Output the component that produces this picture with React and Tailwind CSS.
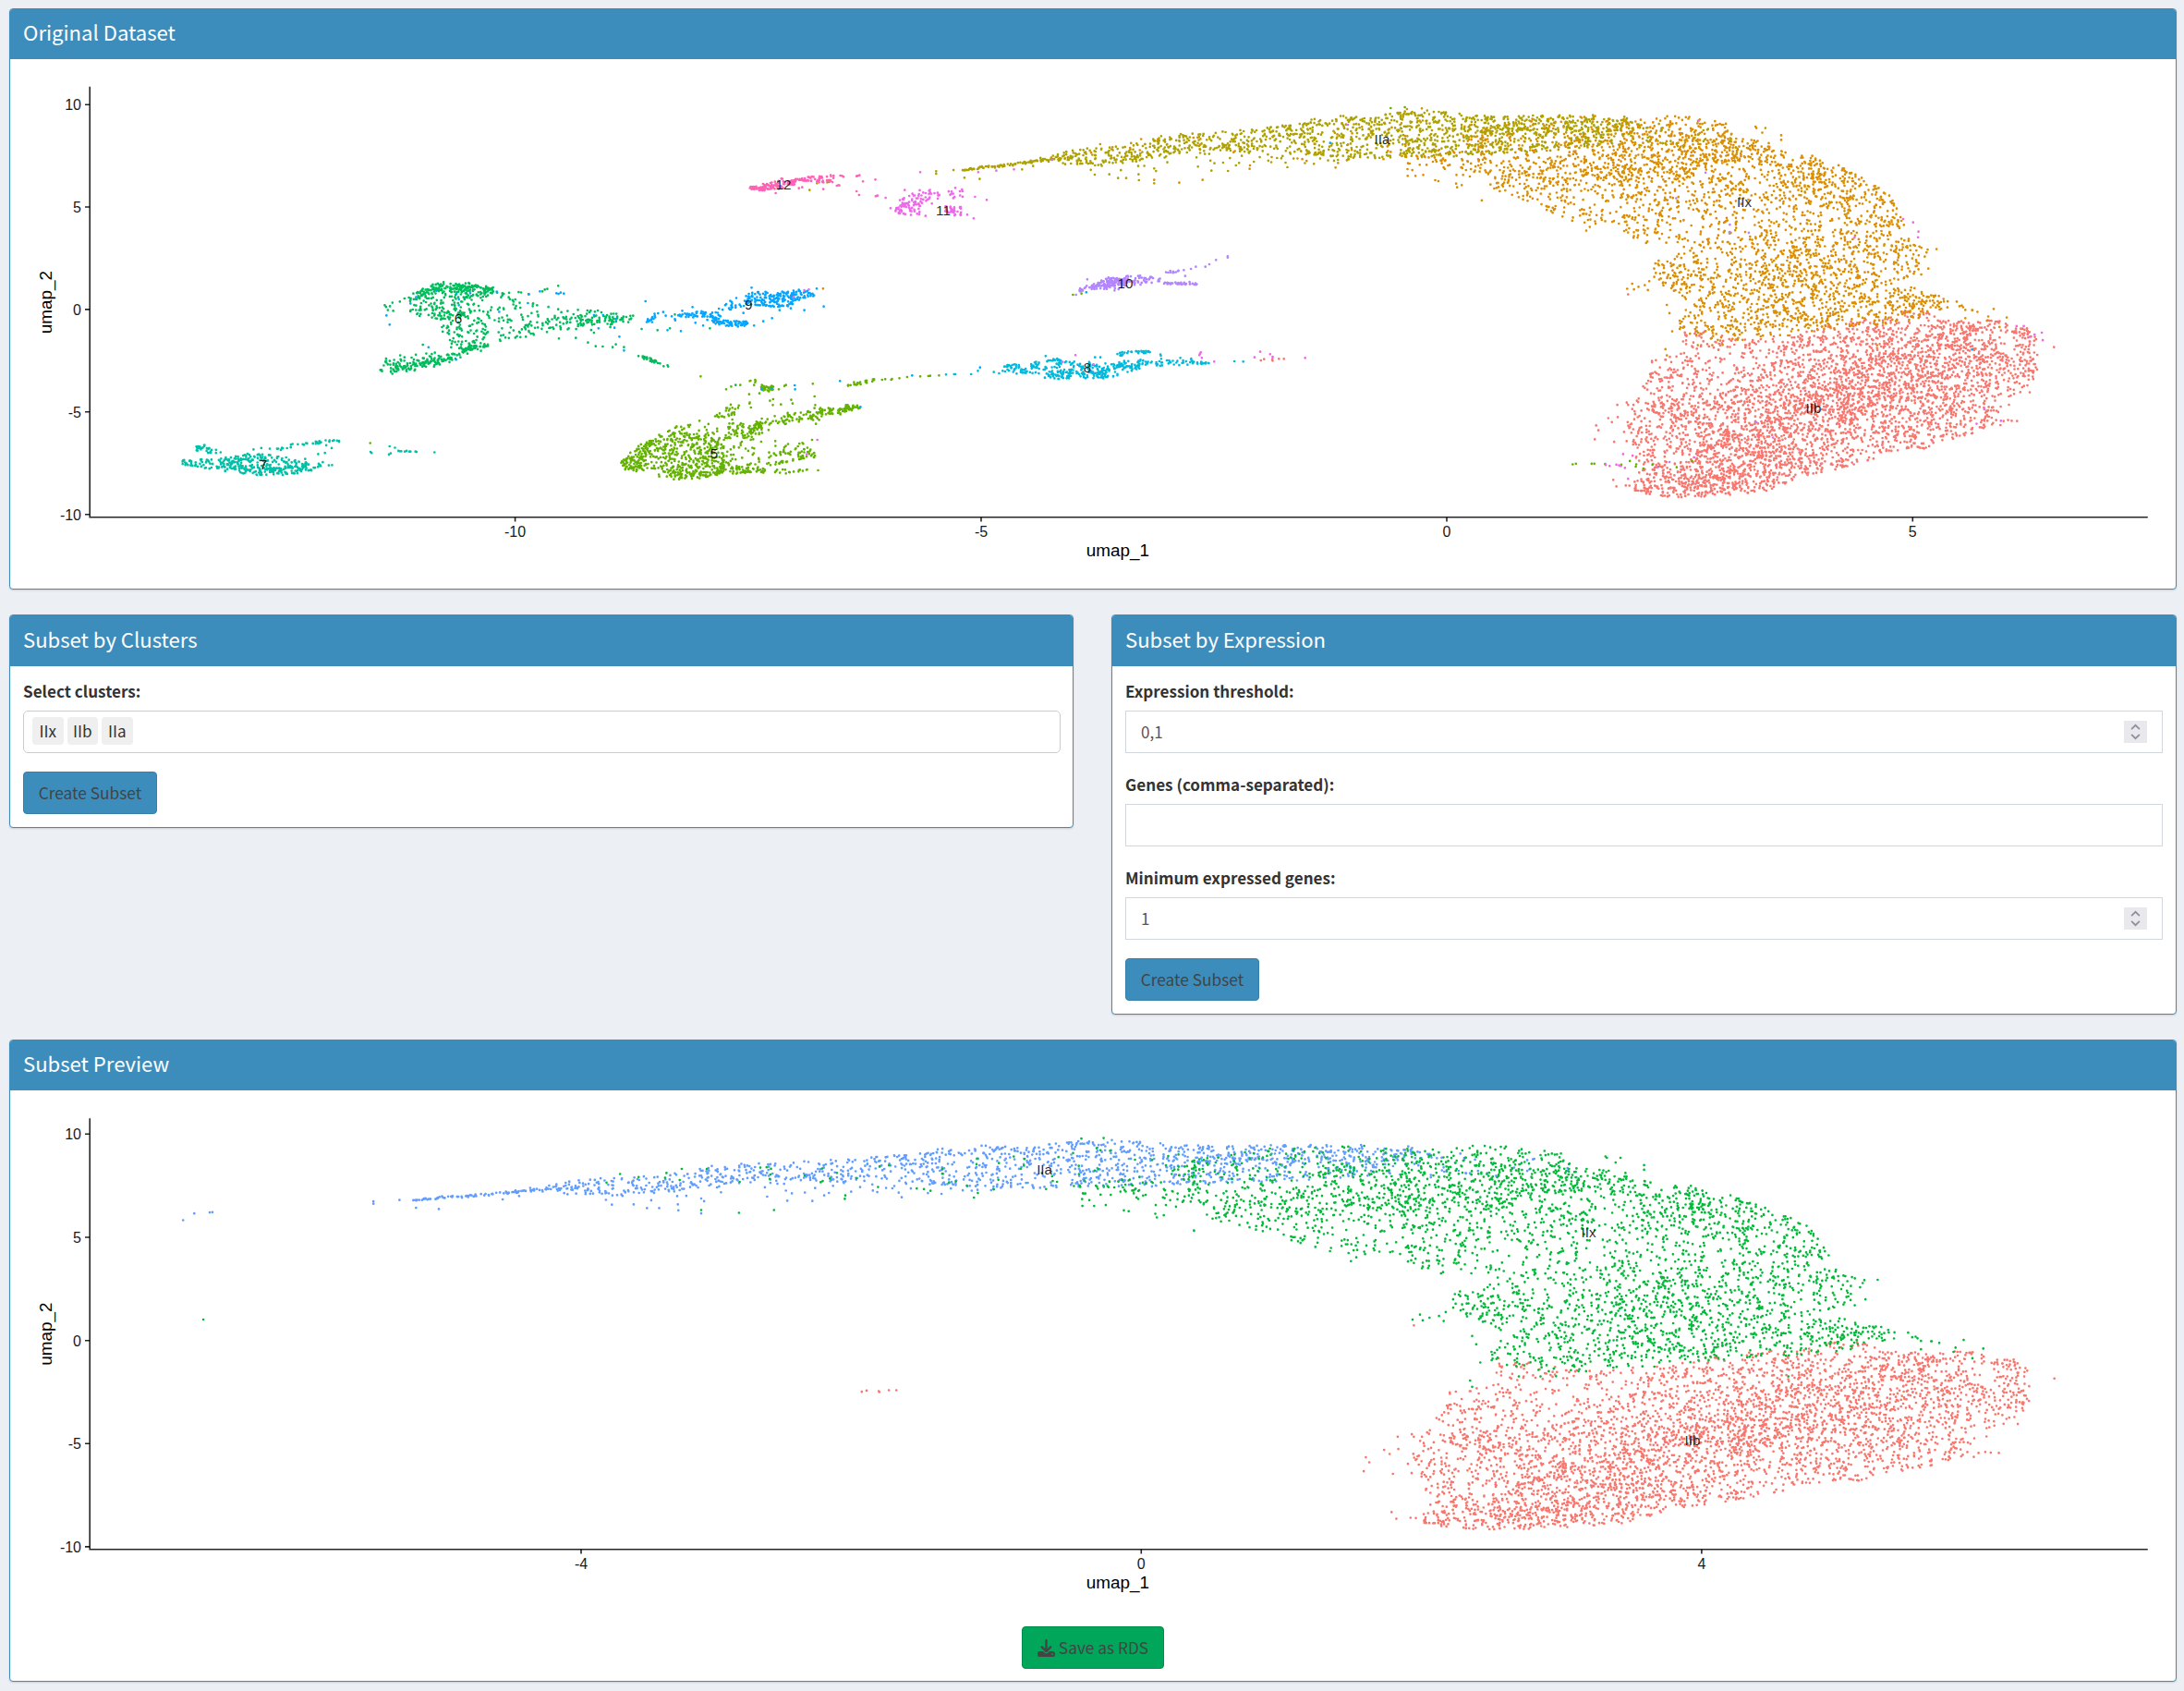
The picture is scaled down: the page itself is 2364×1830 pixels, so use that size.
import React from "react";
import { FaDownload } from "react-icons/fa6";

/* ---------- point cloud ---------- */

function makeRng(seed) {
  let s = seed;
  return () => {
    s = (s + 0x6d2b79f5) | 0;
    let t = Math.imul(s ^ (s >>> 15), 1 | s);
    t = (t + Math.imul(t ^ (t >>> 7), 61 | t)) ^ t;
    return ((t ^ (t >>> 14)) >>> 0) / 4294967296;
  };
}

const rnd = makeRng(7);

// Tiles of the embedding: origin and units per pixel on each axis.
const A = [0, 0, 2.613, 2.613];
const B = [600, 80, 2.613, 3];
const C = [1100, 80, 2.613, 3];
const D = [1600, 80, 2.052, 2.8];

const clusters = { IIb: [], IIx: [], IIa: [], c5: [], c6: [], c7: [], c8: [], c9: [], c10: [], c11: [], c12: [] };

const put = (id, t, x, y) => clusters[id].push([t[0] + x / t[2], t[1] + y / t[3]]);

// Explicit points.
const dots = (id, t, list) => list.forEach(([x, y]) => put(id, t, x, y));

// n points along a band; stations are [x, centre y, half height, weight].
function band(id, t, n, st, soft) {
  const cum = [0];
  for (let i = 1; i < st.length; i++) {
    cum.push(cum[i - 1] + (st[i][0] - st[i - 1][0]) * ((st[i][3] ?? 1) + (st[i - 1][3] ?? 1)));
  }
  const total = cum[cum.length - 1];
  for (let k = 0; k < n; k++) {
    const r = rnd() * total;
    let i = 1;
    while (cum[i] < r) i++;
    const a = st[i - 1];
    const b = st[i];
    const f = (r - cum[i - 1]) / (cum[i] - cum[i - 1]);
    const u = soft ? (rnd() + rnd() + rnd() - 1.5) / 1.2 : rnd() * 2 - 1;
    put(id, t, a[0] + (b[0] - a[0]) * f, a[1] + (b[1] - a[1]) * f + u * (a[2] + (b[2] - a[2]) * f));
  }
}

function inside(p, x, y) {
  let c = false;
  for (let i = 0, j = p.length - 1; i < p.length; j = i++) {
    if (p[i][1] > y !== p[j][1] > y && x < ((p[j][0] - p[i][0]) * (y - p[i][1])) / (p[j][1] - p[i][1]) + p[i][0]) c = !c;
  }
  return c;
}

// n points inside a polygon; weight(x, y) in 0..1 thins the cloud.
function area(id, t, n, p, weight) {
  const xs = p.map((q) => q[0]);
  const ys = p.map((q) => q[1]);
  const x0 = Math.min(...xs);
  const y0 = Math.min(...ys);
  const w = Math.max(...xs) - x0;
  const h = Math.max(...ys) - y0;
  let k = 0;
  while (k < n) {
    const x = x0 + rnd() * w;
    const y = y0 + rnd() * h;
    if (inside(p, x, y) && (!weight || rnd() < weight(x, y))) {
      put(id, t, x, y);
      k++;
    }
  }
}

const bump = (x, y, cx, cy, sx, sy) => Math.exp(-(((x - cx) / sx) ** 2) - ((y - cy) / sy) ** 2);

/* IIb */
area("IIb", D, 4250, [
  [455, 765], [500, 775], [560, 800], [620, 798], [700, 790], [760, 762], [820, 745], [900, 745], [940, 722], [985, 708], [1030, 738],
  [1100, 755], [1140, 742], [1190, 760], [1215, 765], [1240, 800], [1247, 870], [1243, 910], [1225, 970], [1195, 988], [1165, 1020],
  [1150, 1055], [1125, 1078], [1040, 1112], [990, 1142], [900, 1158], [820, 1190], [700, 1232], [640, 1265], [540, 1278], [450, 1285],
  [380, 1275], [330, 1255], [350, 1225], [365, 1190], [335, 1140], [315, 1110], [330, 1050], [350, 990], [370, 930], [387, 870], [430, 855], [455, 800],
], (x, y) => Math.min(1, 0.38
  + 0.55 * bump(x, y, 480, 1245, 170, 50)
  + 0.42 * bump(x, y, 620, 1140, 160, 100)
  + 0.4 * bump(x, y, 760, 980, 150, 100)
  + 0.42 * bump(x, y, 980, 900, 150, 110)
  + 0.35 * bump(x, y, 1200, 880, 60, 40)
  - 0.2 * bump(x, y, 540, 850, 130, 80)
  - 0.12 * bump(x, y, 340, 1120, 40, 150)
  - 0.12 * bump(x, y, 1190, 980, 70, 60)));
dots("IIb", D, [
  [262, 1065], [267, 1080], [259, 1107], [289, 1043], [297, 1055], [309, 1003], [310, 1040], [330, 996], [333, 1003], [302, 1115], [300, 1230],
  [307, 1250], [328, 1247], [1279, 828], [1197, 1052], [1185, 1051], [1177, 1049], [1167, 1052], [1160, 1064], [333, 668], [345, 1003], [386, 870],
]);
dots("IIb", C, [[692, 930], [701, 926], [724, 928], [725, 931], [743, 925], [757, 925]]);

/* IIx */
area("IIx", D, 3200, [
  [0, 262], [0, 300], [40, 355], [100, 378], [160, 420], [240, 465], [290, 458], [350, 500], [415, 510], [450, 535], [415, 570], [400, 600],
  [400, 640], [470, 690], [450, 735], [440, 780], [500, 800], [560, 812], [630, 800], [700, 792], [760, 780], [850, 762], [950, 758],
  [1000, 728], [1050, 712], [1040, 680], [1000, 660], [930, 625], [985, 610], [990, 560], [1000, 530], [965, 510], [945, 480], [950, 430],
  [930, 385], [880, 335], [830, 298], [790, 268], [745, 248], [690, 243], [640, 205], [570, 192], [550, 150], [490, 130], [430, 125],
  [350, 140], [290, 160], [200, 200], [100, 240],
], (x, y) => Math.min(1, 0.38
  + 0.5 * bump(x, y, 540, 210, 110, 45)
  + 0.4 * bump(x, y, 370, 270, 130, 60)
  + 0.35 * bump(x, y, 750, 300, 80, 50)
  + 0.3 * bump(x, y, 890, 380, 60, 60)
  + 0.5 * bump(x, y, 960, 690, 60, 35)
  + 0.2 * bump(x, y, 720, 610, 180, 80)
  + 0.15 * bump(x, y, 660, 740, 150, 50)
  - 0.18 * bump(x, y, 180, 400, 180, 70)
  - 0.2 * bump(x, y, 450, 480, 90, 60)
  - 0.08 * bump(x, y, 620, 450, 120, 60)));
area("IIx", D, 130, [[0, 170], [120, 135], [300, 125], [350, 140], [290, 190], [150, 230], [0, 262]]);
area("IIx", C, 75, [[1100, 270], [1300, 200], [1330, 200], [1330, 330], [1250, 310], [1100, 290]]);
area("IIx", C, 45, [[1306, 300], [1568, 320], [1568, 465], [1500, 435], [1400, 402], [1340, 370]]);
band("IIx", C, 50, [[860, 240, 70], [1000, 230, 75], [1150, 230, 90], [1320, 240, 80]]);
band("IIx", C, 30, [[200, 240, 22, 0.3], [500, 230, 30, 0.4], [700, 230, 50, 1], [860, 220, 70, 1]]);
dots("IIx", C, [
  [390, 344], [461, 353], [527, 344], [903, 304], [1107, 331], [1129, 331], [1151, 328], [1185, 345], [1194, 348], [1245, 328], [1244, 356],
  [1247, 368], [1260, 361], [1317, 411], [1264, 328], [1283, 333], [1147, 112], [1105, 114], [661, 297], [660, 308],
]);
dots("IIx", D, [
  [616, 160], [618, 164], [638, 164], [631, 178], [673, 186], [673, 200], [1018, 531], [331, 651], [342, 636], [346, 653], [356, 645], [370, 640],
  [377, 655], [380, 628], [391, 590], [401, 566], [419, 853], [416, 834], [419, 700], [425, 725], [431, 780], [1145, 712], [1174, 738], [1158, 767],
  [1133, 735], [1130, 748], [1097, 716], [1098, 716], [1109, 721], [1082, 740], [1082, 715], [1077, 707], [1074, 702], [1063, 690], [1069, 704],
  [886, 822], [517, 802], [520, 822], [543, 821], [488, 822], [240, 475], [1000, 590], [8, 383], [376, 508], [373, 512],
]);
band("IIx", D, 25, [[390, 600, 30], [460, 620, 50]]);
dots("IIx", B, [[760, 697]]);

/* IIa */
band("IIa", B, 105, [[1155, 312, 3, 1], [1230, 302, 6, 0.9], [1290, 294, 8, 1.8], [1350, 288, 9, 0.6], [1400, 275, 12, 0.8], [1450, 268, 20, 1.3]], true);
dots("IIa", B, [
  [1080, 316], [1080, 324], [1129, 312], [1160, 337], [1203, 341], [722, 377], [743, 355], [772, 352], [777, 351], [1323, 310], [1354, 299],
]);
band("IIa", C, 880, [
  [130, 272, 22, 1.1], [200, 268, 26, 1.2], [300, 262, 28, 0.7], [400, 240, 32, 0.9], [480, 218, 26, 1.1], [600, 218, 32, 0.9], [700, 218, 44, 1.1],
  [800, 212, 50, 1.1], [870, 207, 60, 1.3], [1000, 205, 70, 1.4], [1080, 200, 74, 1.8], [1170, 195, 74, 2], [1306, 202, 68, 1.8],
]);
band("IIa", C, 80, [[180, 300, 20], [340, 290, 40], [500, 260, 44], [600, 275, 34], [850, 265, 30], [1000, 265, 30]]);
band("IIa", C, 70, [[830, 165, 18], [930, 148, 14], [1000, 150, 20], [1080, 155, 35], [1170, 145, 28], [1250, 165, 35]]);
dots("IIa", C, [[288, 338], [311, 338], [347, 345], [390, 355], [767, 303], [842, 292], [599, 315], [552, 314], [222, 327], [263, 326], [410, 202], [346, 326]]);
band("IIa", D, 300, [[0, 185, 60, 2], [60, 182, 56, 1.9], [150, 180, 55, 1.7], [250, 175, 50, 1.2], [345, 170, 40, 0.6]]);
band("IIa", D, 130, [[0, 160, 30, 1.4], [100, 155, 28, 1.6], [230, 158, 28, 1.8], [345, 155, 24, 1.1]]);
band("IIa", D, 34, [[345, 190, 45, 1.5], [490, 190, 30, 0.8], [580, 210, 25, 0.3]]);

/* 5 */
area("c5", B, 400, [[185, 1265], [200, 1240], [235, 1205], [300, 1175], [345, 1160], [435, 1170], [480, 1210], [490, 1250], [480, 1298], [430, 1312], [340, 1318], [300, 1310], [250, 1295], [215, 1290]]);
area("c5", B, 70, [[185, 1265], [235, 1205], [310, 1180], [260, 1240], [240, 1290], [200, 1285]]);
area("c5", B, 50, [[300, 1270], [450, 1262], [470, 1300], [340, 1318], [300, 1305]]);
area("c5", B, 80, [[440, 1180], [600, 1205], [740, 1195], [740, 1240], [600, 1275], [560, 1290], [450, 1290]]);
band("c5", B, 80, [[450, 1290, 14, 2], [540, 1286, 10, 1.4], [600, 1288, 7, 0.7], [660, 1292, 8, 0.8], [715, 1287, 3, 0.5]]);
band("c5", B, 45, [[600, 1252, 20], [680, 1240, 18], [738, 1230, 16]]);
band("c5", B, 75, [[480, 1168, 24, 1], [540, 1162, 32, 1.4], [590, 1145, 36, 1]], true);
band("c5", B, 140, [[560, 1145, 18, 0.5], [640, 1122, 20, 0.7], [730, 1108, 22, 1.3], [800, 1092, 18, 1.5], [850, 1083, 12, 1.8], [865, 1081, 4, 1]], true);
band("c5", B, 40, [[585, 1020, 14], [620, 1020, 10]], true);
band("c5", B, 24, [[270, 1190, 20], [400, 1160, 32], [470, 1135, 36]]);
band("c5", B, 35, [[320, 1170, 20], [440, 1150, 40], [520, 1140, 40]]);
band("c5", B, 20, [[465, 1100, 16], [525, 1085, 20]]);
band("c5", B, 25, [[830, 1010, 4], [865, 1002, 6], [905, 995, 7]]);
dots("c5", B, [
  [414, 982], [486, 1024], [500, 1015], [526, 1010], [553, 997], [555, 996], [568, 993], [569, 997], [568, 1001], [565, 1010], [551, 1040],
  [553, 1067], [552, 1070], [556, 1083], [610, 1061], [619, 1056], [618, 1075], [641, 1073], [670, 1058], [674, 1070], [736, 1047], [738, 1075],
  [731, 1006], [655, 1010], [651, 1013], [635, 1024], [580, 1037], [927, 993], [936, 991], [953, 993], [955, 990], [976, 988], [998, 984],
  [1035, 982], [1058, 981], [1063, 980], [1088, 979], [746, 1287], [729, 1188], [704, 1201], [625, 1192], [585, 1194], [740, 1136], [367, 1151],
  [346, 1145], [1467, 717], [1491, 713], [606, 1156],
]);
dots("c5", D, [[210, 1183], [217, 1181], [252, 1181], [258, 1181], [282, 1182], [318, 1184], [337, 1173], [351, 1183], [350, 1190], [387, 1184], [441, 1192], [400, 1190], [475, 1173], [367, 1196]]);
dots("c5", C, [[1059, 111], [1099, 108]]);
dots("c5", A, [[1047, 1253]]);

/* 6 */
area("c6", A, 215, [[1155, 840], [1200, 808], [1255, 798], [1330, 802], [1395, 812], [1395, 835], [1330, 850], [1310, 900], [1240, 905], [1185, 895], [1155, 885]]);
band("c6", A, 90, [[1180, 835, 16], [1255, 812, 14], [1330, 812, 13], [1395, 820, 13]], true);
area("c6", A, 110, [[1240, 890], [1340, 870], [1380, 930], [1380, 965], [1330, 985], [1275, 985], [1250, 945]]);
area("c6", A, 85, [[1300, 830], [1400, 820], [1480, 850], [1568, 870], [1568, 935], [1500, 950], [1400, 970], [1360, 930]]);
band("c6", A, 180, [[1075, 1050, 10, 0.8], [1105, 1045, 18, 2], [1160, 1035, 19, 1.4], [1220, 1022, 17, 1.3], [1270, 1012, 17, 1.4], [1310, 992, 19, 2], [1350, 982, 15, 1.8], [1385, 978, 8, 0.3]], true);
band("c6", A, 28, [[1085, 1025, 10], [1240, 1010, 18]]);
band("c6", A, 25, [[1460, 940, 15], [1510, 930, 20], [1568, 912, 22]]);
dots("c6", A, [
  [1088, 863], [1092, 868], [1097, 877], [1103, 866], [1110, 856], [1112, 879], [1131, 853], [1144, 844], [1196, 975], [1132, 1005], [1176, 1003],
  [1440, 828], [1474, 827], [1495, 832], [1534, 824], [1541, 819], [1548, 817], [1442, 846], [1508, 858], [1551, 868], [1467, 826], [1421, 829],
]);
band("c6", B, 120, [[0, 795, 36, 1], [60, 798, 36, 1.3], [110, 795, 38, 1.8], [170, 797, 26, 1.6], [230, 790, 14, 0.6]], true);
dots("c6", B, [
  [11, 688], [11, 764], [18, 829], [13, 859], [61, 857], [95, 872], [117, 884], [137, 885], [165, 887], [174, 878], [197, 887], [238, 916], [247, 828],
  [292, 832], [327, 826], [440, 826], [341, 781], [293, 939], [299, 940], [309, 949], [320, 946], [322, 950], [513, 1010], [38, 829], [112, 840],
]);
band("c6", B, 26, [[250, 920, 4], [270, 927, 6], [288, 935, 4]]);

/* 7 */
band("c7", A, 290, [[515, 1307, 6, 1], [560, 1310, 12, 1.1], [620, 1312, 18, 1.3], [680, 1313, 26, 1.7], [740, 1314, 30, 2.4], [800, 1317, 26, 2.2], [845, 1320, 18, 1.8], [880, 1321, 10, 0.9], [912, 1320, 9, 0.8]]);
band("c7", A, 60, [[640, 1320, 14], [760, 1328, 12], [850, 1322, 12]], true);
band("c7", A, 26, [[555, 1268, 6], [580, 1268, 10], [600, 1278, 8]]);
band("c7", A, 38, [[780, 1273, 3], [820, 1262, 6], [870, 1256, 4], [910, 1248, 4], [970, 1248, 2]]);
dots("c7", A, [
  [717, 1271], [739, 1267], [763, 1269], [742, 1285], [611, 1272], [624, 1279], [611, 1281], [700, 1283], [938, 1267], [900, 1284], [919, 1281],
  [923, 1259], [930, 1316], [939, 1315], [913, 1307], [863, 1298], [1048, 1278], [1051, 1281], [1102, 1262], [1117, 1266], [1105, 1282], [1100, 1285],
  [1127, 1275], [1131, 1276], [1135, 1276], [1145, 1277], [1150, 1275], [1158, 1277], [1161, 1277], [1175, 1277], [1178, 1278], [1229, 1279],
]);

/* 8 */
band("c8", C, 255, [[-35, 955, 10, 1], [-5, 957, 17, 1.5], [20, 957, 15, 1], [60, 955, 22, 1.2], [110, 957, 34, 1.6], [150, 960, 30, 1.7], [200, 962, 28, 1.6], [260, 962, 26, 1.8], [300, 952, 22, 1.6], [350, 942, 14, 1.2], [365, 938, 8, 0.8]]);
band("c8", C, 60, [[80, 975, 12], [180, 978, 12], [280, 968, 14]]);
band("c8", C, 30, [[285, 914, 6], [310, 905, 6], [350, 903, 4], [378, 903, 4]]);
band("c8", C, 48, [[360, 940, 8], [430, 938, 10], [490, 937, 7], [545, 938, 2]]);
dots("c8", C, [[83, 916], [223, 920], [238, 920], [408, 911], [409, 915], [464, 922], [495, 924], [495, 928], [617, 933], [642, 934], [410, 925], [426, 930]]);
dots("c8", B, [[1108, 976], [1131, 975], [1134, 975], [1179, 975], [1198, 964], [1243, 968], [1258, 972], [1268, 964]]);

/* 9 */
band("c9", B, 185, [[540, 733, 18, 1], [570, 730, 22, 1.5], [620, 732, 25, 1.7], [665, 730, 25, 1.9], [700, 714, 15, 1.2], [735, 716, 5, 0.5]]);
band("c9", B, 55, [[350, 785, 8], [420, 782, 16], [470, 785, 18]], true);
band("c9", B, 70, [[445, 798, 12, 0.8], [480, 806, 12, 1.2], [530, 812, 9, 1.8], [547, 810, 7, 1.4]]);
band("c9", B, 24, [[465, 768, 14], [490, 752, 16], [545, 735, 20]]);
band("c9", B, 14, [[260, 790, 16], [300, 790, 16]]);
dots("c9", B, [
  [258, 738], [308, 773], [391, 757], [362, 769], [341, 796], [342, 800], [332, 787], [315, 785], [399, 808], [421, 817], [358, 835], [320, 832],
  [558, 694], [742, 697], [762, 755], [707, 767], [637, 767], [616, 793], [591, 803], [565, 817], [535, 776], [669, 761], [6, 712], [12, 714], [18, 710],
  [27, 713], [170, 824], [173, 796], [184, 853], [197, 898], [680, 1011], [681, 1024], [808, 997], [1012, 979], [866, 1081], [1204, 953], [615, 1022],
  [125, 826], [138, 783], [112, 783], [586, 1024],
]);
dots("c9", A, [
  [1093, 892], [1102, 918], [1212, 982], [1290, 1017], [1161, 858], [1177, 840], [1234, 822], [1291, 831], [1298, 846], [1298, 863], [1330, 829],
  [1405, 825], [1412, 882], [1493, 857], [1496, 832], [1527, 824],
]);
dots("c9", C, [[888, 224], [234, 688], [198, 709]]);
dots("c9", D, [[1097, 835]]);

/* 10 */
band("c10", C, 200, [[175, 703, 6, 0.5], [205, 692, 13, 1], [240, 682, 19, 2.2], [280, 680, 22, 2.8], [320, 672, 21, 2], [355, 670, 16, 0.9], [408, 670, 13, 0.5]], true);
band("c10", C, 36, [[418, 679, 3], [460, 680, 4], [500, 680, 5], [515, 686, 2]]);
band("c10", C, 12, [[422, 644, 2], [440, 642, 5], [475, 637, 2]]);
dots("c10", C, [[201, 667], [169, 717], [494, 633], [508, 626], [535, 626], [546, 618], [565, 604], [598, 592], [598, 596], [478, 656]]);
dots("c10", D, [[505, 299], [440, 377], [559, 457], [558, 480], [601, 481], [618, 1056], [425, 1176]]);

/* 11 */
band("c11", B, 52, [[965, 446, 10, 0.8], [985, 438, 20, 2], [1010, 436, 23, 2], [1035, 438, 18, 0.8]]);
band("c11", B, 50, [[975, 420, 10], [1010, 408, 20], [1045, 395, 24], [1070, 385, 14], [1090, 392, 16]]);
band("c11", B, 34, [[1105, 440, 12], [1130, 446, 14], [1155, 446, 14]]);
band("c11", B, 12, [[1115, 390, 18], [1155, 392, 20]]);
dots("c11", B, [
  [951, 436], [937, 402], [914, 395], [991, 377], [1190, 399], [1223, 409], [1186, 469], [1168, 457], [1050, 461], [1134, 370], [1250, 314], [1300, 310],
  [1035, 319], [1199, 319], [1408, 279], [1474, 913], [707, 702], [720, 700], [677, 724], [744, 1188], [714, 1235], [1068, 421], [1437, 935], [1525, 943],
]);
dots("c11", C, [[522, 904], [520, 908], [518, 913], [525, 922], [560, 934], [690, 902], [674, 920], [718, 910], [725, 918], [725, 922], [817, 922], [938, 165]]);
dots("c11", D, [
  [966, 450], [978, 478], [977, 495], [944, 440], [836, 496], [1196, 764], [1212, 764], [1252, 784], [1254, 807], [1236, 790], [1225, 797], [322, 1152],
  [343, 1157], [283, 1185], [292, 1188], [307, 1184], [313, 1186], [326, 1194], [317, 1188], [333, 1227], [398, 1192], [480, 1162], [655, 1102], [1107, 1060],
  [1124, 1016], [1161, 1051], [490, 141],
]);

/* 12 */
band("c12", B, 125, [[552, 373, 6, 0.6], [580, 370, 13, 1.8], [610, 366, 16, 2], [645, 358, 18, 2], [680, 350, 11, 0.9]], true);
band("c12", B, 55, [[680, 346, 4], [720, 340, 7], [760, 342, 13], [790, 338, 13]]);
dots("c12", B, [
  [626, 387], [692, 371], [701, 368], [761, 374], [799, 363], [804, 361], [806, 362], [809, 330], [814, 331], [818, 334], [855, 332], [858, 331], [863, 329],
  [873, 349], [908, 343], [855, 381], [862, 393], [909, 397], [912, 396],
]);

/* ---------- charts ---------- */

const tracePath = (pts, fx = (v) => v, fy = (v) => v) =>
  pts.map(([x, y]) => `M${fx(x).toFixed(1)} ${fy(y).toFixed(1)}h.01`).join("");

const overviewLayers = [
  ["IIb", "#F8766D"], ["IIx", "#DB8E00"], ["IIa", "#AEA200"], ["c5", "#64B200"], ["c6", "#00BD5C"], ["c7", "#00C1A7"],
  ["c8", "#00BADE"], ["c9", "#00A6FF"], ["c10", "#B385FF"], ["c11", "#EF67EB"], ["c12", "#FF63B6"],
].map(([id, color]) => ({ color, d: tracePath(clusters[id]) }));

// The preview uses the same embedding, stretched to its own axis range.
const px = (x) => 1235.3 + (x - 1566) * 1.5037;
const py = (y) => 1450.7 + (y - 334.9) * 1.0072;
const previewLayers = [["IIb", "#F8766D"], ["IIa", "#619CFF"], ["IIx", "#00BA38"]].map(([id, color]) => ({
  color,
  d: tracePath(clusters[id], px, py),
}));

const overview = {
  viewBox: "11 64 2344 572",
  height: 572,
  top: 94.5,
  base: 559.7,
  xTicks: [[557.6, "-10"], [1062, "-5"], [1566, "0"], [2070.3, "5"]],
  yTicks: [[113.2, "10"], [224, "5"], [334.9, "0"], [445.8, "-5"], [556.7, "-10"]],
  labels: [
    [496, 345, "6"], [285, 502.5, "7"], [848, 200, "12"], [1021, 228, "11"], [810.3, 330, "9"], [773, 490.5, "5"], [1177, 397.5, "8"],
    [1218, 306.3, "10"], [1496, 151, "IIa"], [1888, 219, "IIx"], [1963, 441.8, "IIb"],
  ],
  yTitle: 327,
  xTitle: 602,
  layers: overviewLayers,
};

const preview = {
  viewBox: "11 1180 2344 565",
  height: 565,
  top: 1211,
  base: 1676.7,
  xTicks: [[629, "-4"], [1235.3, "0"], [1841.9, "4"]],
  yTicks: [[1227.3, "10"], [1339, "5"], [1450.7, "0"], [1562.3, "-5"], [1673.9, "-10"]],
  labels: [[1130.6, 1266, "IIa"], [1719.6, 1334.2, "IIx"], [1832, 1558.4, "IIb"]],
  yTitle: 1443.5,
  xTitle: 1719,
  layers: previewLayers,
};

function Scatter({ c }) {
  return (
    <svg viewBox={c.viewBox} width="2344" height={c.height} className="block font-['Liberation_Sans',Arial,sans-serif]">
      {c.layers.map((l, i) => (
        <path key={i} d={l.d} stroke={l.color} strokeWidth="2.7" strokeLinecap="round" fill="none" />
      ))}
      <g fill="#000" fillOpacity=".85" fontSize="15.2" textAnchor="middle">
        {c.labels.map(([x, y, t]) => (
          <text key={t} x={x} y={y + 5.2}>{t}</text>
        ))}
      </g>
      <g stroke="#000" strokeOpacity=".85" strokeWidth="1.6" fill="none">
        <path d={`M97.2 ${c.top}V${c.base}H2324`} strokeLinecap="square" />
        <path d={c.yTicks.map(([y]) => `M92 ${y}h5`).join("") + c.xTicks.map(([x]) => `M${x} ${c.base}v4.8`).join("")} />
      </g>
      <g fill="#1a1a1a" fontSize="16">
        {c.yTicks.map(([y, t]) => (
          <text key={t} x="88" y={y + 5.8} textAnchor="end">{t}</text>
        ))}
        {c.xTicks.map(([x, t]) => (
          <text key={t} x={x} y={c.base + 21.5} textAnchor="middle">{t}</text>
        ))}
      </g>
      <g fill="#000" fontSize="18.9" textAnchor="middle">
        <text x="1210" y={c.xTitle}>umap_1</text>
        <text transform={`translate(56 ${c.yTitle}) rotate(-90)`}>umap_2</text>
      </g>
    </svg>
  );
}

/* ---------- interface ---------- */

function Box({ title, className = "", headerClass, children }) {
  return (
    <section className={`flex flex-col overflow-hidden rounded-[4px] border border-[#3c8dbc] bg-white shadow-[0_1px_2px_rgba(0,0,0,0.15)] ${className}`}>
      <header className={`flex shrink-0 items-center bg-[#3c8dbc] px-3.5 ${headerClass}`}>
        <h3 className="text-[22.1px] leading-none text-white">{title}</h3>
      </header>
      {children}
    </section>
  );
}

function Label({ children }) {
  return <label className="flex h-[27px] items-center pb-px text-[17.1px] font-bold text-[#333]">{children}</label>;
}

function Field({ value, spinner }) {
  return (
    <div className="mt-[7px] flex h-[46px] items-center justify-between border border-[#d2d6de] bg-white pr-4 pl-4 text-[17.1px] text-[#555]">
      <span>{value}</span>
      {spinner && (
        <svg width="25" height="24" viewBox="0 0 25 24" className="bg-[#e9e9ed]" fill="none" stroke="#8f8f9d" strokeWidth="1.8" strokeLinecap="round">
          <path d="M8.6 8.6 12.5 4.8 16.4 8.6M8.6 15.4 12.5 19.2 16.4 15.4" />
        </svg>
      )}
    </div>
  );
}

function CreateButton() {
  return (
    <button className="flex h-[46px] w-[145px] items-center justify-center rounded-[4px] border border-[#367fa9] bg-[#3c8dbc] text-[17.3px] text-[#444]">
      Create Subset
    </button>
  );
}

export default function App() {
  return (
    <div className="h-[1830px] w-[2364px] overflow-hidden bg-[#ecf0f5] pt-[9px] pr-2 pl-2.5 font-['Noto_Sans_CJK_JP','Noto_Sans_CJK_SC',sans-serif]">
      <Box title="Original Dataset" className="h-[629px]" headerClass="h-[54px] pb-1.5">
        <Scatter c={overview} />
      </Box>

      <div className="mt-[27px] flex items-start gap-[41px]">
        <Box title="Subset by Clusters" className="h-[231px] w-[1152px]" headerClass="h-[55px] pb-1">
          <div className="pt-3.5 pr-[13px] pl-3.5">
            <Label>Select clusters:</Label>
            <div className="mt-[7px] flex h-[46px] gap-1 rounded-[5px] border border-[#ccc] bg-white px-[9px] pt-1.5">
              {["IIx", "IIb", "IIa"].map((c) => (
                <span key={c} className="flex h-[30px] w-[33.5px] items-center justify-center rounded-[4px] bg-[#efefef] text-[17.1px] text-[#333]">
                  {c}
                </span>
              ))}
            </div>
            <div className="mt-5">
              <CreateButton />
            </div>
          </div>
        </Box>

        <Box title="Subset by Expression" className="h-[433px] w-[1153px]" headerClass="h-[55px] pb-1">
          <div className="px-3.5 pt-3.5">
            <Label>Expression threshold:</Label>
            <Field value="0,1" spinner />
            <div className="mt-[21px]">
              <Label>Genes (comma-separated):</Label>
              <Field value="" />
            </div>
            <div className="mt-[21px]">
              <Label>Minimum expressed genes:</Label>
              <Field value="1" spinner />
            </div>
            <div className="mt-5">
              <CreateButton />
            </div>
          </div>
        </Box>
      </div>

      <Box title="Subset Preview" className="mt-[27px] h-[695px]" headerClass="h-[54px] pb-1.5">
        <Scatter c={preview} />
        <div className="mt-[15px] flex justify-center">
          <button className="flex h-[46px] w-[154px] items-center justify-center gap-1 rounded-[4px] border border-[#008d4c] bg-[#00a65a] text-[17.3px] text-[#444]">
            <FaDownload className="size-[19px]" />
            <span>Save as RDS</span>
          </button>
        </div>
      </Box>
    </div>
  );
}
